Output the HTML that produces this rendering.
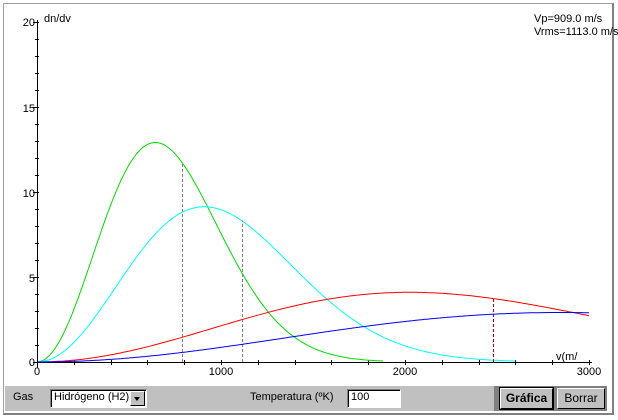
<!DOCTYPE html>
<html><head><meta charset="utf-8"><style>
*{margin:0;padding:0;box-sizing:border-box}
body{width:618px;height:420px;background:#fff;position:relative;overflow:hidden;font-family:"Liberation Sans",sans-serif;font-size:11px;color:#000}
.frame{position:absolute;left:3px;top:3px;width:611px;height:412px;border:1px solid #a0a0a0;border-right:2px solid #808080;border-bottom:2px solid #808080}
.bar{position:absolute;left:5px;top:386px;width:602px;height:25px;background:#c0c0c0}
.dark{position:absolute;left:494px;top:386px;width:113px;height:25px;background:#808080}
.t{position:absolute;white-space:nowrap}
.btn{position:absolute;top:388px;height:21px;background:#c0c0c0;border:1px solid;border-color:#fff #000 #000 #fff;text-align:center;line-height:19px;font-size:12px}
</style></head><body>
<div class="frame"></div>
<svg id="s" width="618" height="420" style="position:absolute;left:0;top:0" font-family="Liberation Sans, sans-serif" font-size="11"></svg>
<div class="bar"></div>
<div class="dark"></div>
<div class="t" style="left:13px;top:391px;font-size:11px">Gas</div>
<div style="position:absolute;left:50px;top:389px;width:97px;height:19px;background:#fff;border:1px solid;border-color:#808080 #fff #fff #808080;box-shadow:inset 1px 1px 0 #000"></div>
<div class="t" style="left:54px;top:391px;font-size:11px">Hidrógeno (H2)</div>
<div style="position:absolute;left:130px;top:391px;width:15px;height:15px;background:#c0c0c0;border:1px solid;border-color:#fff #000 #000 #fff"></div>
<div style="position:absolute;left:134px;top:397px;width:0;height:0;border-left:3.5px solid transparent;border-right:3.5px solid transparent;border-top:4px solid #000"></div>
<div class="t" style="left:250px;top:391px;font-size:11px">Temperatura (ºK)</div>
<div style="position:absolute;left:347px;top:389px;width:54px;height:19px;background:#fff;border:1px solid;border-color:#808080 #fff #fff #808080;box-shadow:inset 1px 1px 0 #000"></div>
<div class="t" style="left:351px;top:391px;font-size:11px">100</div>
<div class="btn" style="left:500px;width:53px;font-weight:bold;outline:1px solid #000">Gráfica</div>
<div class="btn" style="left:557px;width:48px">Borrar</div>
<script>
var s=document.getElementById('s'),h='';
function X(v){return 37+v*0.184}
function Y(f){return 362-f*17}
h+='<line x1="37.5" y1="20" x2="37.5" y2="368" stroke="#000"/>';
h+='<line x1="33" y1="362.5" x2="592" y2="362.5" stroke="#000"/>';
for(var i=0;i<=20;i++){var y=Y(i)+.5,l=(i%5==0)?4:2;h+='<line x1="'+(37-l)+'" y1="'+y+'" x2="'+(39)+'" y2="'+y+'" stroke="#000"/>';}
for(var v=0;v<=3000;v+=200){var x=Math.round(X(v))+.5;h+='<line x1="'+x+'" y1="360" x2="'+x+'" y2="365" stroke="#000"/>';}
[[0,362],[5,278],[10,193],[15,108],[20,22]].forEach(function(a){h+='<text x="35" y="'+(a[1]+4)+'" text-anchor="end">'+a[0]+'</text>'});
[[0,37],[1000,221],[2000,405],[3000,589]].forEach(function(a){h+='<text x="'+a[1]+'" y="375" text-anchor="middle">'+a[0]+'</text>'});
h+='<text x="44" y="22">dn/dv</text><text x="556" y="360">v(m/</text>';
h+='<text x="534" y="22">Vp=909.0 m/s</text><text x="534" y="35">Vrms=1113.0 m/s</text>';
function f(v,vp){return 4/Math.sqrt(Math.PI)*v*v/(vp*vp*vp)*Math.exp(-v*v/(vp*vp))*1e4}
[[643,'#00dd00',1880],[909,'#00ffff',2600],[2025,'#ff0000',3000],[2850,'#0000ff',3000]].forEach(function(c){
 var p='';for(var v=0;v<=c[2];v+=10){p+=(v?'L':'M')+X(v).toFixed(1)+' '+Y(f(v,c[0])).toFixed(1)}
 h+='<path d="'+p+'" fill="none" stroke="'+c[1]+'" stroke-width="1"/>';
 var vr=c[0]*1.2247;if(vr<3000){var x=Math.round(X(vr))+.5;h+='<line x1="'+x+'" y1="362" x2="'+x+'" y2="'+Y(f(vr,c[0]))+'" stroke="'+(c[1]=='#ff0000'?'#c00000':'#808080')+'" stroke-dasharray="3,2"/>';}
});
s.innerHTML=h;
</script>
</body></html>
